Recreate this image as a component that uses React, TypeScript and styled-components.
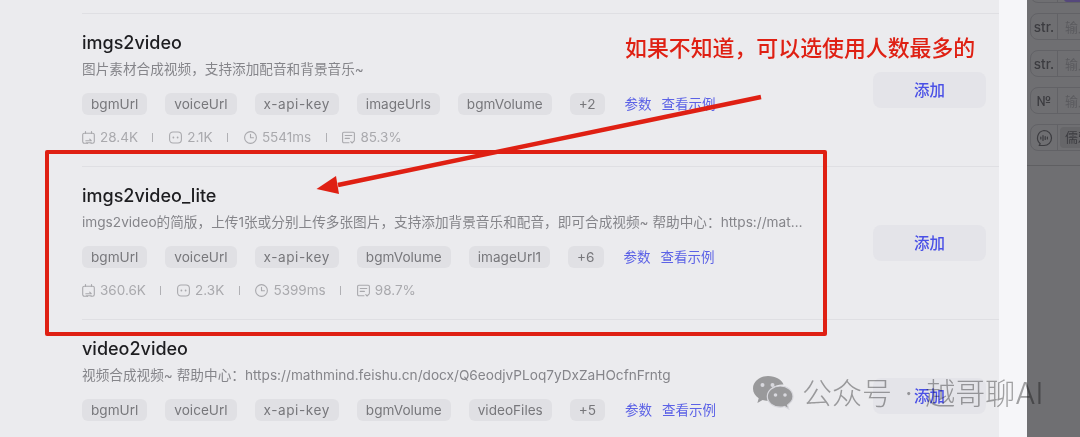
import React from "react";
import styled, { createGlobalStyle } from "styled-components";

const Global = createGlobalStyle`
  html, body { margin: 0; padding: 0; background: #ebebee; }
  body { font-family: Inter, "Noto Sans CJK SC", sans-serif; }
`;

const Page = styled.div`
  position: relative;
  width: 1080px;
  height: 437px;
  overflow: hidden;
  display: flex;
  filter: blur(0.35px);
`;
const List = styled.main`
  width: 917px;
  padding: 13px 0 0 82px;
  background: #ebebee;
  flex: none;
`;
const Row = styled.section`
  height: 153px;
  box-sizing: border-box;
  border-top: 1px solid #dfdfe3;
  display: flex;
  align-items: center;
  padding-right: 13px;
`;
const Body = styled.div`
  width: 727px;
  height: 152px;
  padding-top: 18px;
  box-sizing: border-box;
`;
const Title = styled.h3`
  margin: 0;
  font-size: 18px;
  line-height: 22px;
  font-weight: 500;
  color: #1d1d20;
`;
const Desc = styled.p`
  margin: 5px 0 0;
  font-size: 13.65px;
  line-height: 20px;
  color: #85858a;
  white-space: nowrap;
  overflow: hidden;
  text-overflow: ellipsis;
`;
const Tags = styled.div`
  display: flex;
  align-items: center;
  gap: 18px;
  margin-top: 14px;
`;
const Tag = styled.span<{ $spaced?: boolean }>`
  height: 22px;
  padding: 0 9px;
  border-radius: 6px;
  background: #e0e0e4;
  color: #77777b;
  font-size: 13.6px;
  line-height: 22px;
  white-space: nowrap;
  letter-spacing: ${(p) => (p.$spaced ? "0.55px" : "0")};
`;
const Links = styled.div`
  display: flex;
  gap: 10px;
  margin-left: 2px;
`;
const LinkText = styled.a`
  color: #5c62e6;
  font-size: 13.5px;
  line-height: 22px;
`;
const Stats = styled.div`
  display: flex;
  align-items: center;
  min-height: 20px;
  margin-top: 12px;
  color: #a9a9ad;
  font-size: 13.5px;
  line-height: 20px;
`;
const Stat = styled.span`
  display: inline-flex;
  align-items: center;
  gap: 5px;
  svg { width: 13px; height: 13px; flex: none; }
`;
const Sep = styled.i`
  width: 1px;
  height: 9px;
  background: #b0b0b4;
  margin: 0 15.7px 0 14.5px;
`;
const AddButton = styled.button`
  width: 113px;
  height: 36px;
  margin-left: auto;
  padding: 0 0 2px;
  border: 0;
  border-radius: 8px;
  background: #e4e4e9;
  color: #4a50e6;
  font: 500 15.5px Inter, "Noto Sans CJK SC", sans-serif;
`;
const Gutter = styled.div`
  width: 28px;
  flex: none;
  background: #f6f6f9;
`;
const Side = styled.aside`
  flex: 1;
  background: #6f6f72;
  overflow: hidden;
`;
const SideRows = styled.div`
  display: flex;
  flex-direction: column;
  gap: 10px;
  margin-top: -24px;
  padding: 0 0 14px 3px;
  border-bottom: 1px solid #5f5f62;
`;
const SideRow = styled.div`
  width: 80px;
  height: 27px;
  box-sizing: border-box;
  border: 1px solid #626266;
  border-radius: 8px;
  display: flex;
  align-items: center;
  flex: none;
`;
const SideType = styled.span`
  width: 26px;
  height: 100%;
  flex: none;
  display: flex;
  align-items: center;
  justify-content: center;
  border-right: 1px solid #626266;
  color: #3c3c40;
  font-size: 13.5px;
  font-weight: 500;
  svg { width: 18px; height: 18px; }
`;
const SideHint = styled.span`
  margin-left: 7px;
  color: #5b5b5f;
  font-size: 13px;
`;
const SideChip = styled.span`
  margin-left: 2px;
  padding: 0 5px;
  height: 21px;
  border-radius: 4px;
  background: #666669;
  color: #3c3c40;
  font-size: 13px;
  line-height: 21px;
`;
const Accent = styled.span`
  margin-left: 6px;
  width: 40px;
  height: 20px;
  border-radius: 3px;
  background: #55487c;
  align-self: flex-end;
`;

const Note = styled.div`
  position: absolute;
  left: 625px;
  top: 34px;
  color: #df2013;
  font-size: 21.9px;
  font-weight: 500;
  line-height: 28px;
  white-space: nowrap;
`;
const Frame = styled.div`
  position: absolute;
  left: 45px;
  top: 150px;
  width: 782px;
  height: 186px;
  box-sizing: border-box;
  border: 4.5px solid #df2013;
  border-radius: 2px;
`;
const ArrowLayer = styled.svg`
  position: absolute;
  left: 0;
  top: 0;
`;
const Watermark = styled.div`
  position: absolute;
  left: 752px;
  top: 374px;
  display: flex;
  align-items: center;
  gap: 8px;
  color: #a6a6a6;
  mix-blend-mode: multiply;
  font-size: 30px;
  font-weight: 300;
  line-height: 38px;
  word-spacing: 4px;
  white-space: nowrap;
  svg { width: 42px; height: 36px; flex: none; }
`;

const CalendarIcon = () => (
  <svg viewBox="0 0 13 13" fill="none" stroke="currentColor" strokeWidth="1.1" strokeLinecap="round" strokeLinejoin="round">
    <path d="M3.5 .6v1.8M9.5 .6v1.8M4 12.3H2.4A1.7 1.7 0 0 1 .7 10.6V3.9A1.7 1.7 0 0 1 2.4 2.2h8.2a1.7 1.7 0 0 1 1.7 1.7v6.7a1.7 1.7 0 0 1-1.7 1.7H9" />
    <path d="M3.8 9.7h5.4M7.7 8.1l1.5 1.6M9.2 11.8H4.3l1.2 1" />
  </svg>
);
const BotIcon = () => (
  <svg viewBox="0 0 13 13" fill="none" stroke="currentColor" strokeWidth="1.1">
    <rect x=".6" y="1" width="11.8" height="11" rx="3.4" />
    <circle cx="4.4" cy="6.5" r=".9" fill="currentColor" stroke="none" />
    <circle cx="8.6" cy="6.5" r=".9" fill="currentColor" stroke="none" />
  </svg>
);
const ClockIcon = () => (
  <svg viewBox="0 0 13 13" fill="none" stroke="currentColor" strokeWidth="1.1" strokeLinecap="round" strokeLinejoin="round">
    <circle cx="6.5" cy="6.5" r="5.9" />
    <path d="M6.5 3.3V6.8H9.5" />
  </svg>
);
const ReviewIcon = () => (
  <svg viewBox="0 0 13 13" fill="none" stroke="currentColor" strokeWidth="1.1" strokeLinecap="round" strokeLinejoin="round">
    <path d="M7 11.8H1.8A1.2 1.2 0 0 1 .6 10.6V2.4A1.2 1.2 0 0 1 1.8 1.2h9.4a1.2 1.2 0 0 1 1.2 1.2v6.4" />
    <path d="M3.2 4.5h6.6M3.2 7.4h4.2M8.8 10.7l1.3 1.3 2.3-2.4" />
  </svg>
);
const VoiceIcon = () => (
  <svg viewBox="0 0 18 18" fill="none" stroke="#3c3c40" strokeWidth="1.2" strokeLinecap="round" strokeLinejoin="round">
    <path d="M9 1.5a7.5 7.5 0 0 1 0 15H4.2l1-1.8A7.5 7.5 0 0 1 9 1.5Z" />
    <path d="M5.8 8v2M8 6.5v5M10.2 7.5v3M12.4 8v2" />
  </svg>
);
const WeChatIcon = () => (
  <svg viewBox="0 0 42 36" fill="currentColor">
    <path d="M16 1C7.7 1 1 6.7 1 13.5c0 4 2.2 7.4 5.7 9.7L5.4 28l5.2-3c1.5.5 3.1.7 5.4.8-.5-1.4-.7-2.6-.7-3.8 0-7 6.7-12.4 15-12.4h1.2C30 4.6 23.6 1 16 1Z" />
    <path d="M41 21.6c0-6-5.8-10.6-12.7-10.6-7.2 0-13 4.7-13 10.6s5.8 10.6 13 10.6c1.5 0 3-.2 4.3-.7l4.1 2.5-1.1-4.1C38.8 27.9 41 25 41 21.6Z" stroke="#ebebee" strokeWidth="1.2" />
    <circle cx="10.5" cy="10" r="2" fill="#ebebee" />
    <circle cx="20.5" cy="10" r="2" fill="#ebebee" />
    <circle cx="23.5" cy="20" r="1.8" fill="#ebebee" />
    <circle cx="33" cy="20" r="1.8" fill="#ebebee" />
  </svg>
);

type Item = {
  name: string;
  desc: string;
  tags: string[];
  more: string;
  stats: [string, string, string, string];
};

const items: Item[] = [
  {
    name: "imgs2video",
    desc: "图片素材合成视频，支持添加配音和背景音乐~",
    tags: ["bgmUrl", "voiceUrl", "x-api-key", "imageUrls", "bgmVolume"],
    more: "+2",
    stats: ["28.4K", "2.1K", "5541ms", "85.3%"],
  },
  {
    name: "imgs2video_lite",
    desc: "imgs2video的简版，上传1张或分别上传多张图片，支持添加背景音乐和配音，即可合成视频~ 帮助中心：https://mathmind.feishu.cn/docx/Q6eodjvPLoq7yDxZaHOcfnFrntg",
    tags: ["bgmUrl", "voiceUrl", "x-api-key", "bgmVolume", "imageUrl1"],
    more: "+6",
    stats: ["360.6K", "2.3K", "5399ms", "98.7%"],
  },
  {
    name: "video2video",
    desc: "视频合成视频~ 帮助中心：https://mathmind.feishu.cn/docx/Q6eodjvPLoq7yDxZaHOcfnFrntg",
    tags: ["bgmUrl", "voiceUrl", "x-api-key", "bgmVolume", "videoFiles"],
    more: "+5",
    stats: ["", "", "", ""],
  },
];

export default function App() {
  return (
    <>
      <Global />
      <Page>
        <List>
          {items.map((it) => (
            <Row key={it.name}>
              <Body>
                <Title>{it.name}</Title>
                <Desc>{it.desc}</Desc>
                <Tags>
                  {it.tags.map((t) => (
                    <Tag key={t} $spaced={t.includes("-")}>{t}</Tag>
                  ))}
                  <Tag>{it.more}</Tag>
                  <Links>
                    <LinkText>参数</LinkText>
                    <LinkText>查看示例</LinkText>
                  </Links>
                </Tags>
                <Stats>
                  <Stat><CalendarIcon />{it.stats[0]}</Stat>
                  <Sep />
                  <Stat><BotIcon />{it.stats[1]}</Stat>
                  <Sep />
                  <Stat><ClockIcon />{it.stats[2]}</Stat>
                  <Sep />
                  <Stat><ReviewIcon />{it.stats[3]}</Stat>
                </Stats>
              </Body>
              <AddButton>添加</AddButton>
            </Row>
          ))}
        </List>
        <Gutter />
        <Side>
          <SideRows>
            <SideRow><SideType /><Accent /></SideRow>
            <SideRow><SideType>str.</SideType><SideHint>输入</SideHint></SideRow>
            <SideRow><SideType>str.</SideType><SideHint>输入</SideHint></SideRow>
            <SideRow><SideType>№</SideType><SideHint>输入</SideHint></SideRow>
            <SideRow><SideType><VoiceIcon /></SideType><SideChip>儒雅</SideChip></SideRow>
          </SideRows>
        </Side>

        <Note>如果不知道，可以选使用人数最多的</Note>
        <Frame />
        <ArrowLayer width="1080" height="437" viewBox="0 0 1080 437">
          <path d="M761 97 L338 185" stroke="#df2013" strokeWidth="4.5" fill="none" />
          <polygon points="316.5,189 336,176 339,194" fill="#df2013" />
        </ArrowLayer>
        <Watermark>
          <WeChatIcon />
          <span>公众号 · 越哥聊AI</span>
        </Watermark>
      </Page>
    </>
  );
}
